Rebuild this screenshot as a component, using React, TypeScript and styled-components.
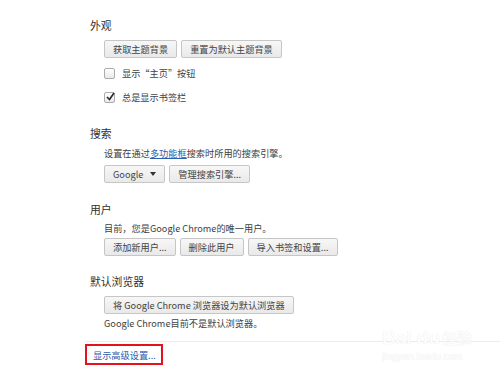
import React from "react";
import styled, { createGlobalStyle } from "styled-components";

const Global = createGlobalStyle`
  html, body { margin: 0; padding: 0; background: #ffffff; }
  body { font-family: "Noto Sans CJK SC", "Noto Sans", sans-serif; }
`;

const Page = styled.div`
  position: relative;
  width: 500px;
  height: 374px;
  overflow: hidden;
  padding-top: 17px;
  box-sizing: border-box;
  background: #fff;
`;

const Content = styled.div`
  padding-left: 90px;
`;

const Section = styled.section<{ $top: number }>`
  margin-top: ${(p) => p.$top}px;
`;

const Heading = styled.h3`
  margin: 0;
  font-size: 10.8px;
  font-weight: 400;
  line-height: 16px;
  color: #303030;
`;

const Body = styled.div`
  padding-left: 14px;
`;

const Row = styled.div<{ $top: number }>`
  display: flex;
  gap: 4px;
  margin-top: ${(p) => p.$top}px;
`;

const Button = styled.button`
  height: 18px;
  padding: 0 8px;
  box-sizing: border-box;
  border: 1px solid #c6c6c6;
  border-radius: 2px;
  background: linear-gradient(#f7f7f7, #e9e9e9);
  font-family: "Noto Sans CJK SC", "Noto Sans", sans-serif;
  font-size: 9.2px;
  line-height: 16px;
  color: #444;
  display: flex;
  align-items: center;
  gap: 7px;
  white-space: nowrap;
`;

const Text = styled.div<{ $top: number }>`
  margin-top: ${(p) => p.$top}px;
  font-size: 9.2px;
  line-height: 16px;
  color: #404040;
  white-space: nowrap;
`;

const Link = styled.span`
  color: #2a5db0;
  text-decoration: underline;
`;

const CheckRow = styled.label`
  display: flex;
  align-items: center;
  gap: 7px;
  height: 24px;
  font-size: 9.2px;
  color: #444;
`;

const CheckList = styled.div`
  margin-top: 3px;
`;

const Box = styled.span`
  position: relative;
  width: 9px;
  height: 9px;
  border: 1px solid #acacac;
  border-radius: 2px;
  background: linear-gradient(#fefefe, #eaeaea);
  display: flex;
  align-items: center;
  justify-content: center;
`;

const Caret = styled.span`
  width: 0;
  height: 0;
  border-left: 3.5px solid transparent;
  border-right: 3.5px solid transparent;
  border-top: 4px solid #333;
`;

const Divider = styled.div`
  margin: 10px 0 0 85px;
  height: 1px;
  background: #ececec;
`;

const Footer = styled.div`
  padding-left: 85px;
  margin-top: 2px;
`;

const Highlight = styled.div`
  width: 78px;
  height: 21px;
  box-sizing: border-box;
  border: 2px solid #e3121b;
  display: flex;
  align-items: center;
  padding-left: 6px;
`;

const FooterLink = styled.span`
  font-size: 9.2px;
  color: #2a5db0;
  white-space: nowrap;
`;

const Watermark = styled.div`
  position: absolute;
  left: 382px;
  top: 328px;
  color: #fdfdfd;
  text-shadow: 0 0 1px #e2e2e2;
  font-family: "Liberation Sans", sans-serif;
  pointer-events: none;
`;

const MarkTop = styled.div`
  display: flex;
  align-items: flex-end;
  gap: 2px;
  font-size: 19px;
  font-weight: 700;
  line-height: 20px;
`;

const MarkSmall = styled.div`
  font-size: 10px;
  line-height: 14px;
  margin-top: 2px;
`;

const MarkCn = styled.span`
  font-family: "Noto Sans CJK SC", sans-serif;
  font-size: 15px;
`;

const Check = () => (
  <svg width="9" height="9" viewBox="0 0 9 9" style={{ position: "absolute", left: 1, top: -1 }}>
    <path d="M1 5 L3.5 7.5 L8 1" fill="none" stroke="#2b2b2b" strokeWidth="1.7" />
  </svg>
);

export default function App() {
  return (
    <Page>
      <Global />
      <Content>
        <Section $top={0}>
          <Heading>外观</Heading>
          <Body>
            <Row $top={7}>
              <Button>获取主题背景</Button>
              <Button>重置为默认主题背景</Button>
            </Row>
            <CheckList>
              <CheckRow>
                <Box />
                显示“主页”按钮
              </CheckRow>
              <CheckRow>
                <Box>
                  <Check />
                </Box>
                总是显示书签栏
              </CheckRow>
            </CheckList>
          </Body>
        </Section>
        <Section $top={16}>
          <Heading>搜索</Heading>
          <Body>
            <Text $top={4}>
              设置在通过<Link>多功能框</Link>搜索时所用的搜索引擎。
            </Text>
            <Row $top={4}>
              <Button>
                Google <Caret />
              </Button>
              <Button>管理搜索引擎...</Button>
            </Row>
          </Body>
        </Section>
        <Section $top={18}>
          <Heading>用户</Heading>
          <Body>
            <Text $top={3}>目前，您是Google Chrome的唯一用户。</Text>
            <Row $top={2}>
              <Button>添加新用户...</Button>
              <Button>删除此用户</Button>
              <Button>导入书签和设置...</Button>
            </Row>
          </Body>
        </Section>
        <Section $top={17}>
          <Heading>默认浏览器</Heading>
          <Body>
            <Row $top={7}>
              <Button>将 Google Chrome 浏览器设为默认浏览器</Button>
            </Row>
            <Text $top={1}>Google Chrome目前不是默认浏览器。</Text>
          </Body>
        </Section>
      </Content>
      <Divider />
      <Footer>
        <Highlight>
          <FooterLink>显示高级设置...</FooterLink>
        </Highlight>
      </Footer>
      <Watermark>
        <MarkTop>
          Bai du <MarkCn>经验</MarkCn>
        </MarkTop>
        <MarkSmall>jingyan.baidu.com</MarkSmall>
      </Watermark>
    </Page>
  );
}
